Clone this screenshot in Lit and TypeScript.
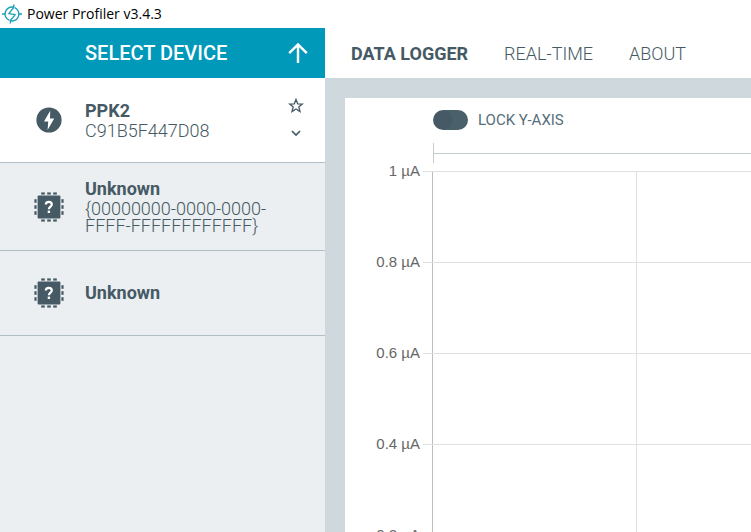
import { LitElement, html, css, svg, nothing } from "lit";
import { customElement, property, state } from "lit/decorators.js";
import { classMap } from "lit/directives/class-map.js";

interface Device {
  name: string;
  serial?: string;
  known: boolean;
}

const DEVICES: Device[] = [
  { name: "PPK2", serial: "C91B5F447D08", known: true },
  { name: "Unknown", serial: "{00000000-0000-0000-FFFF-FFFFFFFFFFFF}", known: false },
  { name: "Unknown", known: false },
];

const TABS = ["DATA LOGGER", "REAL-TIME", "ABOUT"];
const TICKS = ["1 µA", "0.8 µA", "0.6 µA", "0.4 µA", "0.2 µA", "0 µA"];
const PINS = [9, 15, 21];

const logoIcon = html`<svg width="20" height="20" viewBox="0 0 20 20" fill="none" stroke="#1aa0b8" stroke-width="1.4" aria-hidden="true">
  <path d="M11.2 3.2A6.9 6.9 0 0 0 7.4 16.4M8.8 16.8A6.9 6.9 0 0 0 12.6 3.6" />
  <path d="M11.8 0.6V3.4L6.8 9.6L13.2 10.6L8.4 16.4V19.4" stroke-linejoin="round" />
  <path d="M0 10H3.2M16.8 10H20" />
</svg>`;

const boltIcon = html`<svg width="30" height="30" viewBox="0 0 30 30" aria-hidden="true">
  <circle cx="15" cy="15" r="12.6" fill="#455a64" />
  <path d="M16.2 5.8L10 16.4H14.2L13.6 25L20.2 13.4H16Z" fill="#fff" />
</svg>`;

const chipIcon = html`<svg width="30" height="30" viewBox="0 0 30 30" aria-hidden="true">
  <rect x="3.6" y="3.6" width="22.8" height="22.8" rx="1" fill="#455a64" />
  ${PINS.map(
    (p) => svg`<g fill="#455a64">
      <rect x=${p - 1.8} y="0.4" width="3.6" height="2.2" /><rect x=${p - 1.8} y="27.4" width="3.6" height="2.2" />
      <rect x="0.4" y=${p - 1.8} width="2.2" height="3.6" /><rect x="27.4" y=${p - 1.8} width="2.2" height="3.6" />
    </g>`
  )}
  <path d="M11.8 12.6C11.8 10.6 13 9.8 14.8 9.8C16.7 9.8 17.8 10.8 17.8 12.4C17.8 14.6 14.9 14.8 14.9 17.2" fill="none" stroke="#fff" stroke-width="2.2" />
  <rect x="13.7" y="18.6" width="2.4" height="2.4" fill="#fff" />
</svg>`;

const arrowIcon = html`<svg width="20" height="22" viewBox="0 0 20 22" fill="none" stroke="#fff" stroke-width="2.4" aria-hidden="true">
  <path d="M10 21V2.5M1.2 11.2L10 2.4L18.8 11.2" />
</svg>`;

const starIcon = html`<svg width="16" height="16" viewBox="0 0 16 16" fill="none" stroke="#455a64" stroke-width="1.3" aria-hidden="true">
  <path d="M8 1.4L9.7 5.8L14.4 6L10.8 9L12 13.6L8 11L4 13.6L5.2 9L1.6 6L6.3 5.8Z" />
</svg>`;

const chevronIcon = html`<svg width="16" height="16" viewBox="0 0 16 16" fill="none" stroke="#455a64" stroke-width="1.7" aria-hidden="true">
  <path d="M4 5L8 9L12 5" />
</svg>`;

@customElement("device-row")
class DeviceRow extends LitElement {
  @property({ attribute: false }) device!: Device;

  static styles = css`
    :host {
      display: flex;
      align-items: center;
      gap: 21px;
      box-sizing: border-box;
      min-height: 85px;
      padding: 15px 21px 15px 34px;
      background: #eceff1;
      border-bottom: 1px solid #b0bec5;
      color: #455a64;
    }
    :host([known]) {
      background: #fff;
    }
    svg {
      display: block;
    }
    .info {
      flex: 1;
      min-width: 0;
      font-size: 18px;
      line-height: 20px;
    }
    .name {
      font-weight: 700;
      line-height: 22px;
    }
    .serial {
      font-weight: 300;
      max-width: 190px;
      line-height: 17px;
      padding-bottom: 1px;
    }
    .actions {
      display: flex;
      flex-direction: column;
      gap: 12px;
    }
    .action {
      padding: 0;
      border: 0;
      background: none;
      cursor: pointer;
    }
  `;

  render() {
    const d = this.device;
    return html`
      ${d.known ? boltIcon : chipIcon}
      <div class="info">
        <div class="name">${d.name}</div>
        ${d.serial ? html`<div class="serial">${d.serial}</div>` : nothing}
      </div>
      ${d.known
        ? html`<div class="actions">
            <button class="action" aria-label="Favorite">${starIcon}</button>
            <button class="action" aria-label="Show more">${chevronIcon}</button>
          </div>`
        : nothing}
    `;
  }
}

@customElement("current-chart")
class CurrentChart extends LitElement {
  static styles = css`
    :host {
      display: block;
    }
    .range {
      display: flex;
      align-items: center;
      height: 20px;
      margin-left: 88px;
      border-left: 1px solid #c4ccd0;
    }
    .track {
      flex: 1;
      height: 1px;
      background: #c4ccd0;
    }
    .chart {
      display: flex;
      gap: 3px;
      margin-top: -2px;
    }
    .labels {
      width: 75px;
      color: #666;
      font: 15px/20px "Liberation Sans", Arial, sans-serif;
      text-align: right;
    }
    .label {
      height: 91px;
    }
    .plot {
      flex: 1;
      min-width: 0;
      padding-top: 10px;
      overflow: hidden;
    }
    .line {
      display: flex;
      box-sizing: border-box;
      height: 91px;
      border-top: 1px solid #e0e0e0;
    }
    .cell {
      flex: 0 0 203px;
      border-left: 1px solid #e0e0e0;
    }
    .cell:first-child {
      margin-left: 9px;
      border-color: #bdbdbd;
    }
  `;

  render() {
    return html`
      <div class="range"><div class="track"></div></div>
      <div class="chart">
        <div class="labels">${TICKS.map((t) => html`<div class="label">${t}</div>`)}</div>
        <div class="plot">
          ${TICKS.slice(1).map(
            () => html`<div class="line">
              ${[...Array(10)].map(() => html`<div class="cell"></div>`)}
            </div>`
          )}
        </div>
      </div>
    `;
  }
}

@customElement("app-root")
class AppRoot extends LitElement {
  @state() private tab = TABS[0];

  static styles = css`
    :host {
      display: flex;
      flex-direction: column;
      height: 100vh;
      overflow: hidden;
      background: #fff;
      color: #455a64;
      font-family: Roboto, "Liberation Sans", sans-serif;
    }
    svg {
      display: block;
    }
    .titlebar {
      display: flex;
      align-items: center;
      gap: 5px;
      height: 28px;
      padding-left: 2px;
      color: #000;
      font: 14px/20px "Open Sans", "Noto Sans", sans-serif;
    }
    .body {
      display: grid;
      grid-template-columns: 325px 1fr;
      grid-template-rows: 50px 1fr;
      flex: 1;
      min-height: 0;
    }
    .select {
      display: flex;
      align-items: center;
      justify-content: space-between;
      padding: 0 17px 0 85px;
      border: 0;
      background: #0099ba;
      color: #fff;
      font: 500 20px/20px Roboto, sans-serif;
      cursor: pointer;
    }
    .tabs {
      display: flex;
      align-items: center;
      gap: 36px;
      padding: 2px 26px 0;
    }
    .tab {
      padding: 0;
      border: 0;
      background: none;
      color: #455a64;
      font: 300 18px/20px Roboto, sans-serif;
      cursor: pointer;
    }
    .tab.active {
      font-weight: 700;
    }
    .devices {
      background: #eceff1;
      overflow: hidden;
    }
    .main {
      padding: 20px 0 0 20px;
      background: #cfd8dc;
      overflow: hidden;
    }
    .card {
      padding-top: 12px;
      background: #fff;
    }
    .lock {
      display: flex;
      align-items: center;
      gap: 10px;
      width: max-content;
      margin: 0 0 13px 88px;
      color: #546e7a;
      font-size: 15px;
      line-height: 20px;
      cursor: pointer;
    }
    .switch {
      appearance: none;
      width: 35px;
      height: 20px;
      margin: 0;
      border-radius: 10px;
      background: radial-gradient(circle at 10px 10px, #455a64 9px, #4a606b 10px);
      cursor: pointer;
    }
    .switch:checked {
      background: #0099ba;
    }
  `;

  render() {
    return html`
      <header class="titlebar">${logoIcon}<span>Power Profiler v3.4.3</span></header>
      <div class="body">
        <button class="select"><span>SELECT DEVICE</span>${arrowIcon}</button>
        <nav class="tabs">
          ${TABS.map(
            (t) => html`<button
              class=${classMap({ tab: true, active: t === this.tab })}
              @click=${() => (this.tab = t)}
            >${t}</button>`
          )}
        </nav>
        <aside class="devices">
          ${DEVICES.map((d) => html`<device-row .device=${d} ?known=${d.known}></device-row>`)}
        </aside>
        <main class="main">
          <section class="card">
            <label class="lock"><input class="switch" type="checkbox" role="switch" />LOCK Y-AXIS</label>
            <current-chart></current-chart>
          </section>
        </main>
      </div>
    `;
  }
}
